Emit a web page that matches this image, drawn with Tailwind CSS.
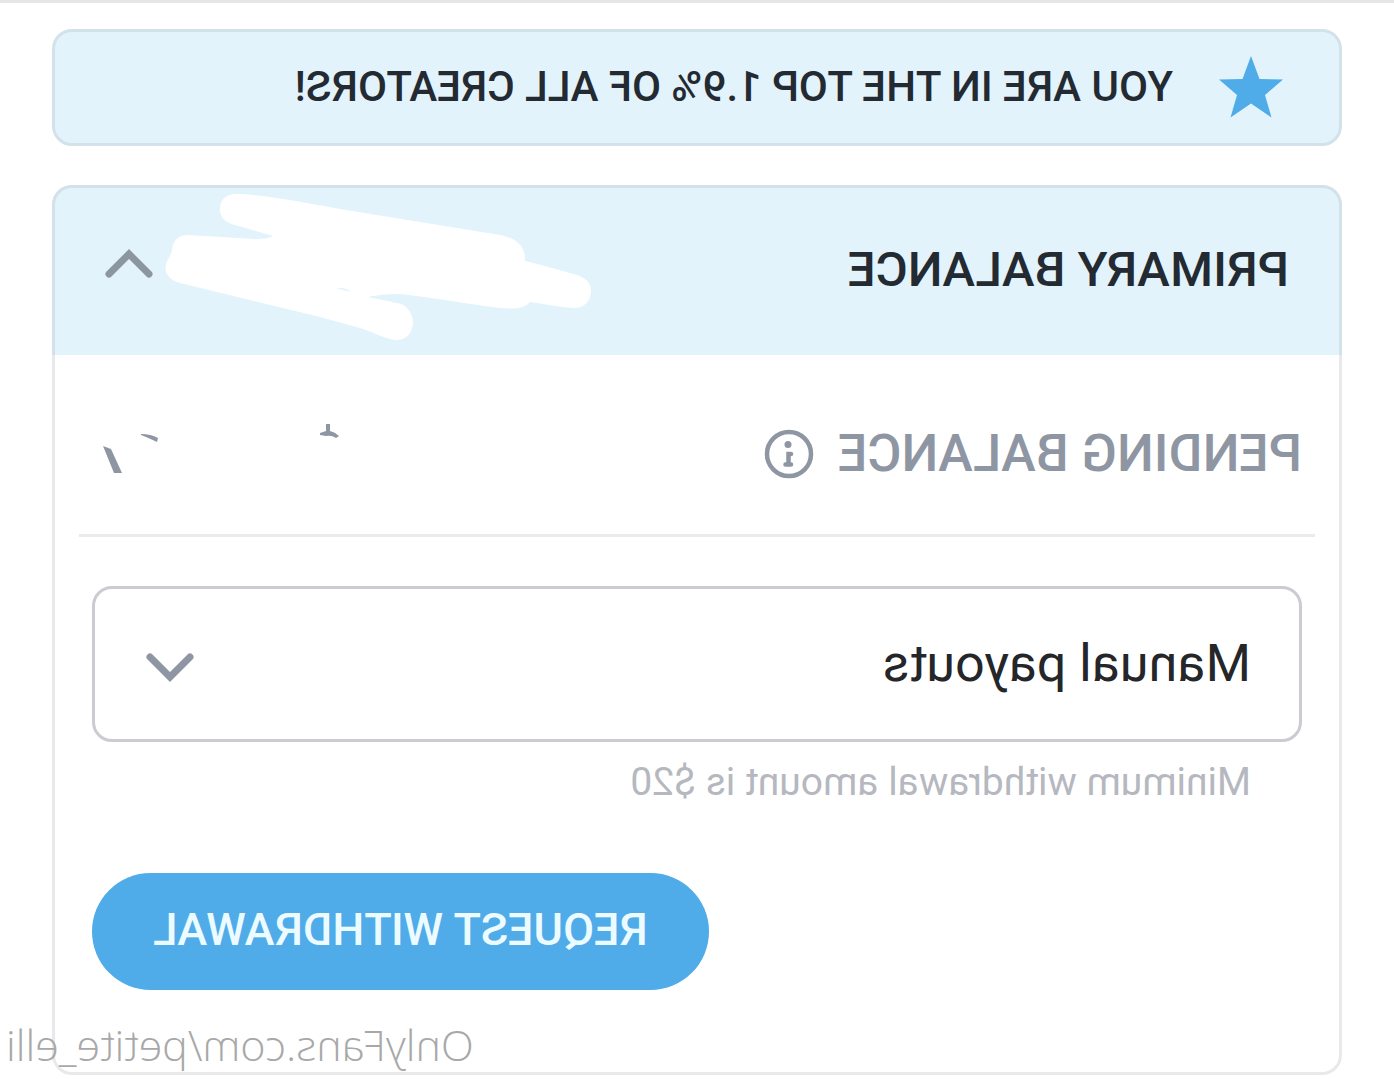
<!DOCTYPE html>
<html lang="en">
<head>
    <meta charset="UTF-8" />
    <meta name="viewport" content="width=device-width, initial-scale=1.0" />
    <title>Balance</title>
    <script src="https://cdn.jsdelivr.net/npm/@tailwindcss/browser@4"></script>
</head>
<body class="bg-white overflow-x-hidden">

    <!-- Whole page is mirrored left to right -->
    <main class="relative -scale-x-100 border-t-3 border-[#e6e6e7] px-[52px] pt-[26px] pb-1 font-['Roboto',sans-serif] text-[#242a32]">

        <!-- Rank banner -->
        <div class="flex items-center gap-[46px] h-[117px] pl-[56px] pb-0.5 rounded-[20px] border-3 border-[#d3e2ea] bg-[#e2f3fc]">
            <svg class="w-16 h-[62px] shrink-0" viewBox="0 0 64 62" fill="#50abe9" aria-hidden="true">
                <path d="M32 0 L40.5 23 L64 23.500 L46 39 L52.500 61.500 L32 47.500 L11.500 61.500 L18 39 L0 23.500 L23.500 23 Z" />
            </svg>
            <p class="text-[42px] leading-[52px] font-medium whitespace-nowrap">YOU ARE IN THE TOP 1.9% OF ALL CREATORS!</p>
        </div>

        <!-- Balance card -->
        <section class="mt-[39px] rounded-[20px] border-3 border-[#e9e9eb] pb-[82px]">
            <div class="-mx-[3px] -mt-[3px] flex items-center h-[170px] pl-[50px] pr-[50px] rounded-t-[20px] border-3 border-b-0 border-[#d3e2ea] bg-[#e2f3fc]">
                <h2 class="pb-1 text-[49px] leading-[60px] font-medium whitespace-nowrap">PRIMARY BALANCE</h2>
                <!-- Scribble over the amount -->
                <svg class="-scale-x-100 ml-auto w-[428px] h-[167px] shrink-0" viewBox="165 188 428 167" fill="#fff" aria-hidden="true">
                    <path d="M236 194 C260 194 300 202 340 209 L500 235 C516 238 526 246 525 261 C545 266 560 270 577 275 C588 279 591 284 591 292 C590 302 584 308 574 308 C558 307 545 304 530 302 C524 309 514 309 500 308 C480 306 450 300 400 294 C385 294 378 295 368 297 L397 303 C407 304 413 314 413 323 C412 334 406 340 396 340 C385 339 375 333 360 328 L320 317 L180 283 C168 280 164 272 166 264 C168 258 171 256 172 250 C173 239 180 235 188 235 L255 239 C265 239 270 238 273 236 L235 225 C224 222 219 216 220 207 C221 199 227 194 236 194 Z" />
                    <path d="M336 288 Q345 287 351 292 Q343 290 336 288 Z" fill="#e2f3fc" />
                </svg>
                <button type="button" aria-label="Collapse" class="ml-[12px] mb-4 shrink-0">
                    <svg class="w-12 h-[30px]" viewBox="0 0 48 30" fill="none" stroke="#8b969f" stroke-width="7" stroke-linecap="round">
                        <path d="M4 25 L24 5 L44 25" />
                    </svg>
                </button>
            </div>

            <div class="mx-6 flex items-center h-[182px] pl-[13px] pr-[22px] pt-[18px] border-b-3 border-[#ebebec] text-[#8f96a3]">
                <h3 class="text-[52px] leading-[60px] font-medium whitespace-nowrap">PENDING BALANCE</h3>
                <button type="button" aria-label="Info" class="ml-[24px] shrink-0">
                    <svg class="w-[50px] h-[50px]" viewBox="0 0 50 50" aria-hidden="true">
                        <circle cx="25" cy="25" r="22" fill="none" stroke="currentColor" stroke-width="4.500" />
                        <circle cx="26" cy="15.500" r="3.500" fill="currentColor" />
                        <path d="M23 25 H25.500 V35 M23 35.500 H28.500" fill="none" stroke="currentColor" stroke-width="4.500" stroke-linecap="round" />
                    </svg>
                </button>
                <!-- What is left of the erased amount -->
                <svg class="-scale-x-100 ml-auto w-[240px] h-[60px] shrink-0" viewBox="100 423 240 60" fill="#8f96a3" aria-hidden="true">
                    <path d="M102 445 L110 448 L121 472 L113 472 Z" />
                    <path d="M140 433 Q150 433 157 437 L156 441 Q148 437 140 434 Z" />
                    <path d="M325 423 H329 V430 Q334 431 338 435 L335 437 Q331 434 325 435 L319 434 V432 L325 430 Z" />
                </svg>
            </div>

            <form class="px-[37px] pt-[49px] flex flex-col">
                <div class="relative">
                    <select id="payouts" aria-label="Payouts" class="appearance-none block w-full h-[156px] pl-[48px] rounded-[20px] border-3 border-[#cbccd2] bg-white text-[52px] text-[#242629]">
                        <option>Manual payouts</option>
                    </select>
                    <svg class="absolute right-[54px] top-[66px] w-12 h-[30px] pointer-events-none" viewBox="0 0 48 30" fill="none" stroke="#8f96a3" stroke-width="7" stroke-linecap="round" aria-hidden="true">
                        <path d="M4 5 L24 25 L44 5" />
                    </svg>
                </div>
                <label for="payouts" class="mt-[16px] pl-[51px] text-[39px] leading-[48px] text-[#b5b8bf]">Minimum withdrawal amount is $20</label>
                <button type="button" class="self-end mt-[67px] h-[117px] w-[617px] pb-1 rounded-full bg-[#50abe9] text-[45px] font-medium text-[#ecfbff] whitespace-nowrap">REQUEST WITHDRAWAL</button>
            </form>
        </section>

        <a href="#" class="absolute right-1.5 bottom-1 text-[43px] leading-[60px] font-['Open_Sans',sans-serif] font-light text-[#a8a8a8]">OnlyFans.com/petite_elli</a>
    </main>

</body>
</html>
